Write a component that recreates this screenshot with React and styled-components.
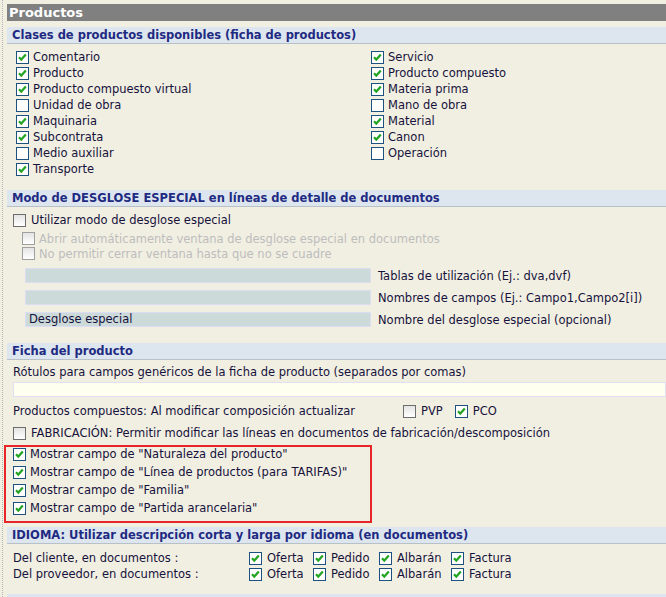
import React from 'react';
import styled, { createGlobalStyle } from 'styled-components';

const GlobalStyle = createGlobalStyle`
    html, body {
        margin: 0;
        padding: 0;
        background: #f1efe2;
    }
    body {
        font-family: 'DejaVu Sans', Verdana, sans-serif;
        font-size: 11.5px;
        color: #16123c;
    }
`;

const Page = styled.div`
    margin-left: 2px;
    border-left: 1px dotted #b4b4b4;
    padding-left: 4px;
    padding-top: 4px;
    min-height: 597px;
    box-sizing: border-box;
    overflow: hidden;
`;

const TitleBar = styled.div`
    height: 17px;
    line-height: 17px;
    background: #808080;
    color: #fff;
    font-weight: bold;
    font-size: 13px;
    padding-left: 2px;
    margin-bottom: 6px;
`;

const SectionHeader = styled.div`
    height: 16px;
    line-height: 16px;
    background: #dde6ee;
    border-bottom: 1px solid #b8c0c8;
    color: #1f2a82;
    font-weight: bold;
    padding-left: 5px;
    margin-top: ${(p) => p.$top || '0'};
    white-space: nowrap;
`;

const SectionBody = styled.div`
    padding: ${(p) => p.$pad || '5px 0 13px 0'};
`;

const ClassGrid = styled.div`
    display: grid;
    grid-template-columns: 355px 1fr;
    padding-left: 9px;
`;

const Row = styled.label`
    display: flex;
    align-items: center;
    gap: ${(p) => p.$gap || '4px'};
    height: ${(p) => p.$h || '16px'};
    padding-left: ${(p) => p.$indent || '0'};
    margin-top: ${(p) => p.$top || '0'};
    color: ${(p) => (p.$disabled ? '#bdbdbd' : 'inherit')};
    white-space: nowrap;
`;

const Box = styled.span`
    width: 13px;
    height: 13px;
    flex: none;
    box-sizing: border-box;
    display: inline-flex;
    align-items: center;
    justify-content: center;
    border: 1px solid ${(p) => (p.$tone === 'plain' ? '#6e6e6e' : p.$tone === 'off' ? '#a0a0a0' : '#1c5180')};
    background: ${(p) => (p.$tone === 'plain' || p.$tone === 'off' ? 'linear-gradient(#e4e4e4, #ffffff)' : '#fff')};
`;

const Check = ({ checked, tone }) => (
    <Box $tone={tone}>
        {checked && (
            <svg width="11" height="11" viewBox="0 0 11 11">
                <path d="M2 5.2 L4.3 7.6 L8.8 2.6" fill="none" stroke="#22a322" strokeWidth="2.2" />
            </svg>
        )}
    </Box>
);

const FieldRow = styled.div`
    display: flex;
    align-items: center;
    gap: 7px;
    padding-left: 18px;
    margin-top: 7px;
`;

const GrayInput = styled.div`
    width: 346px;
    height: 15px;
    line-height: 13px;
    box-sizing: border-box;
    background: #cddada;
    border: 1px solid #dcdcf2;
    padding-left: 3px;
`;

const YellowInput = styled.div`
    height: 15px;
    box-sizing: border-box;
    background: #fffff0;
    border: 1px solid #e0e0f2;
    margin-left: 6px;
    margin-top: 2px;
`;

const TextLine = styled.div`
    height: 16px;
    line-height: 16px;
    padding-left: 6px;
    white-space: nowrap;
`;

const CompRow = styled.div`
    display: flex;
    align-items: center;
    height: 16px;
    padding-left: 6px;
    margin-top: 6px;
    white-space: nowrap;
`;

const CompLabel = styled.span`
    width: 390px;
`;

const Options = styled.div`
    display: flex;
    gap: 12px;
`;

const Highlight = styled.div`
    margin-left: -3px;
    width: 368px;
    box-sizing: border-box;
    border: 2px solid #e8262a;
    padding: 0 0 6px 7px;
    margin-top: 4px;
    display: flex;
    flex-direction: column;
    gap: 4px;
`;

const LangGrid = styled.div`
    display: grid;
    grid-template-columns: 236px 64px 66px 72px auto;
    grid-auto-rows: 16px;
    align-items: center;
    padding-left: 6px;
`;

const classes = [
    ['Comentario', true, 'Servicio', true],
    ['Producto', true, 'Producto compuesto', true],
    ['Producto compuesto virtual', true, 'Materia prima', true],
    ['Unidad de obra', false, 'Mano de obra', false],
    ['Maquinaria', true, 'Material', true],
    ['Subcontrata', true, 'Canon', true],
    ['Medio auxiliar', false, 'Operación', false],
    ['Transporte', true, null, false],
];

const fields = [
    ['', 'Tablas de utilización (Ej.: dva,dvf)'],
    ['', 'Nombres de campos (Ej.: Campo1,Campo2[i])'],
    ['Desglose especial', 'Nombre del desglose especial (opcional)'],
];

const shown = [
    'Mostrar campo de "Naturaleza del producto"',
    'Mostrar campo de "Línea de productos (para TARIFAS)"',
    'Mostrar campo de "Familia"',
    'Mostrar campo de "Partida arancelaria"',
];

const docs = ['Oferta', 'Pedido', 'Albarán', 'Factura'];

const App = () => {
    return (
        <Page>
            <GlobalStyle />
            <TitleBar>Productos</TitleBar>

            <SectionHeader>Clases de productos disponibles (ficha de productos)</SectionHeader>
            <SectionBody>
                <ClassGrid>
                    {classes.map(([a, ca, b, cb]) => (
                        <React.Fragment key={a}>
                            <Row>
                                <Check checked={ca} />
                                {a}
                            </Row>
                            {b ? (
                                <Row>
                                    <Check checked={cb} />
                                    {b}
                                </Row>
                            ) : (
                                <span />
                            )}
                        </React.Fragment>
                    ))}
                </ClassGrid>
            </SectionBody>

            <SectionHeader>Modo de DESGLOSE ESPECIAL en líneas de detalle de documentos</SectionHeader>
            <SectionBody $pad="5px 0 16px 0">
                <Row $indent="6px" $gap="5px">
                    <Check tone="plain" />
                    Utilizar modo de desglose especial
                </Row>
                <Row $indent="15px" $h="15px" $top="3px" $disabled>
                    <Check tone="off" />
                    Abrir automáticamente ventana de desglose especial en documentos
                </Row>
                <Row $indent="15px" $h="15px" $disabled>
                    <Check tone="off" />
                    No permitir cerrar ventana hasta que no se cuadre
                </Row>
                {fields.map(([value, label]) => (
                    <FieldRow key={label}>
                        <GrayInput>{value}</GrayInput>
                        {label}
                    </FieldRow>
                ))}
            </SectionBody>

            <SectionHeader>Ficha del producto</SectionHeader>
            <SectionBody $pad="4px 0 0 0">
                <TextLine>Rótulos para campos genéricos de la ficha de producto (separados por comas)</TextLine>
                <YellowInput />
                <CompRow>
                    <CompLabel>Productos compuestos: Al modificar composición actualizar</CompLabel>
                    <Options>
                        <Row $gap="5px">
                            <Check tone="plain" />
                            PVP
                        </Row>
                        <Row $gap="5px">
                            <Check checked />
                            PCO
                        </Row>
                    </Options>
                </CompRow>
                <Row $indent="6px" $gap="5px" $top="6px">
                    <Check tone="plain" />
                    FABRICACIÓN: Permitir modificar las líneas en documentos de fabricación/descomposición
                </Row>
                <Highlight>
                    {shown.map((t) => (
                        <Row key={t} $h="14px">
                            <Check checked />
                            {t}
                        </Row>
                    ))}
                </Highlight>
            </SectionBody>

            <SectionHeader $top="4px">
                IDIOMA: Utilizar descripción corta y larga por idioma (en documentos)
            </SectionHeader>
            <SectionBody $pad="6px 0 12px 0">
                <LangGrid>
                    {['Del cliente, en documentos :', 'Del proveedor, en documentos :'].map((who) => (
                        <React.Fragment key={who}>
                            <span>{who}</span>
                            {docs.map((d) => (
                                <Row key={d} $gap="5px">
                                    <Check checked />
                                    {d}
                                </Row>
                            ))}
                        </React.Fragment>
                    ))}
                </LangGrid>
            </SectionBody>
            <SectionHeader />
        </Page>
    );
};

export default App;
